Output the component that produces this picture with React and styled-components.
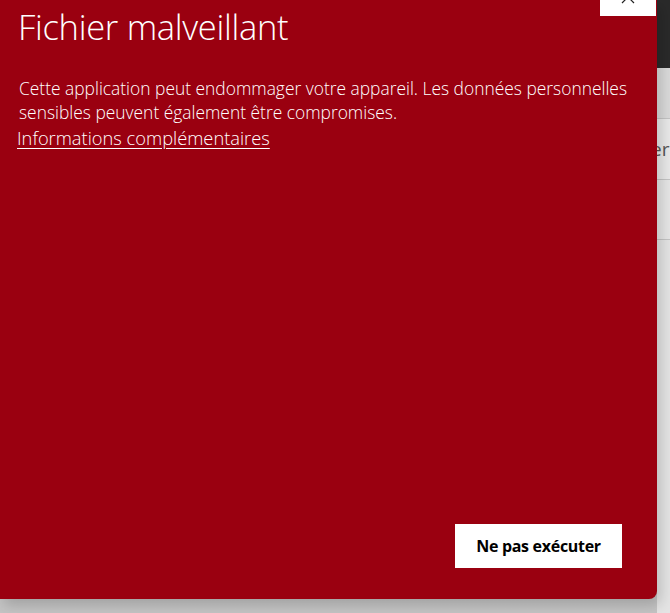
import styled, { createGlobalStyle } from 'styled-components';

const Global = createGlobalStyle`
  html, body {
    margin: 0;
    padding: 0;
    background: #c9c9c9;
    overflow: hidden;
  }
  body {
    font-family: "Segoe UI", "Open Sans", "Noto Sans", sans-serif;
  }
`;

export default function App() {
  return (<>
    <Global />
    <Page>
      <Dialog>
        <CloseButton aria-label="Fermer">
          <svg width="14" height="14" viewBox="0 0 14 14">
            <path d="M1 1 L13 13 M13 1 L1 13" stroke="#222" strokeWidth="1.2" fill="none" />
          </svg>
        </CloseButton>
        <Content>
          <Title>Fichier malveillant</Title>
          <Text>Cette application peut endommager votre appareil. Les données personnelles sensibles peuvent également être compromises.</Text>
          <Link href="#">Informations complémentaires</Link>
        </Content>
        <Footer>
          <Button>Ne pas exécuter</Button>
        </Footer>
      </Dialog>
      <Behind>
        <DarkBar />
        <GreyRow $h={50} $bg="#dadada" />
        <GreyRow $h={60} $bg="#e9e9e9">er</GreyRow>
        <GreyRow $h={59} $bg="#e6e6e6" />
        <GreyRow $h={400} $bg="#e4e4e4" />
      </Behind>
    </Page>
  </>);
}

const Page = styled.div`
  display: flex;
  width: 670px;
  height: 613px;
  background: linear-gradient(#c9c9c9, #c4c4c4);
`;

const Dialog = styled.div`
  position: relative;
  z-index: 1;
  width: 657px;
  height: 599px;
  flex: none;
  background: #9a0010;
  border-radius: 0 0 8px 0;
  box-shadow: 4px 6px 14px rgba(0, 0, 0, 0.18);
  display: flex;
  flex-direction: column;
  color: #fff;
`;

const CloseButton = styled.div`
  position: absolute;
  top: 0;
  right: 1px;
  width: 56px;
  height: 16px;
  background: #fff;
  overflow: hidden;
  display: flex;
  justify-content: center;
  align-items: flex-end;
  svg {
    margin-bottom: 12px;
  }
`;

const Content = styled.div`
  flex: 1;
  padding: 5px 0 0 18px;
  display: flex;
  flex-direction: column;
  align-items: flex-start;
`;

const Title = styled.h1`
  margin: 0;
  font-weight: 300;
  font-size: 34.5px;
  line-height: 44px;
  letter-spacing: -0.3px;
`;

const Text = styled.p`
  margin: 27px 0 0 1px;
  width: 618px;
  font-size: 17.4px;
  font-weight: 300;
  line-height: 24px;
  letter-spacing: 0;
`;

const Link = styled.a`
  margin: 2px 0 0 -1px;
  color: #fff;
  font-size: 18.3px;
  font-weight: 300;
  line-height: 24px;
  letter-spacing: 0;
  text-decoration: underline;
  text-underline-offset: 3px;
`;

const Footer = styled.div`
  display: flex;
  justify-content: flex-end;
  padding: 0 35px 31px 0;
`;

const Button = styled.button`
  width: 167px;
  height: 44px;
  border: none;
  background: #fff;
  color: #000;
  font-family: "Segoe UI", "Open Sans", "Noto Sans", sans-serif;
  font-weight: 700;
  font-size: 16px;
  letter-spacing: -0.3px;
`;

const Behind = styled.div`
  flex: 1;
  display: flex;
  flex-direction: column;
  overflow: hidden;
`;

const DarkBar = styled.div`
  height: 68px;
  background: #2a2a2a;
  flex: none;
`;

const GreyRow = styled.div`
  height: ${p => p.$h}px;
  flex: none;
  background: ${p => p.$bg};
  border-bottom: 1px solid #c4c4c4;
  color: #555;
  font-size: 19px;
  font-family: "Open Sans", sans-serif;
  display: flex;
  align-items: center;
  margin-left: -6px;
  padding-left: 0;
  white-space: nowrap;
`;
